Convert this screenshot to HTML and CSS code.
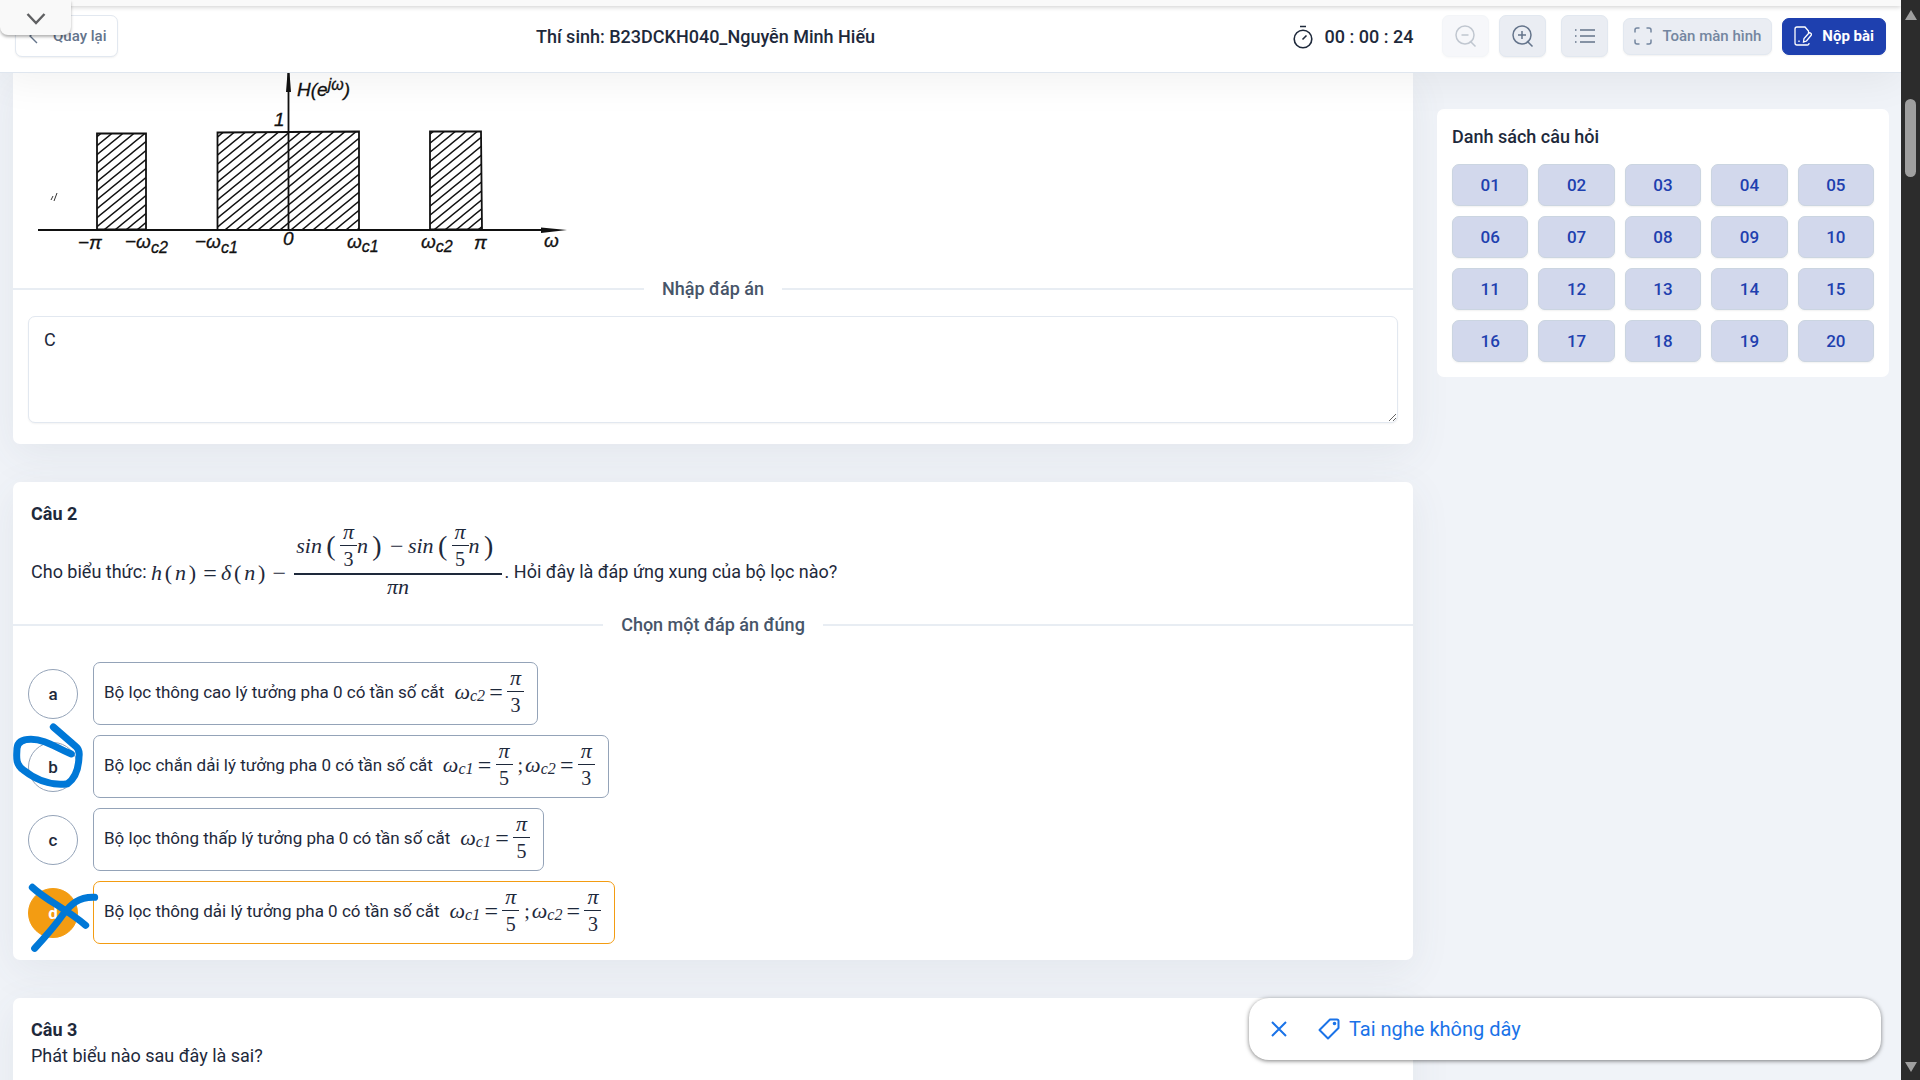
FILE: index.html
```html
<!DOCTYPE html>
<html lang="vi">
<head>
<meta charset="utf-8">
<meta name="viewport" content="width=device-width, initial-scale=1">
<title>Bài thi</title>
<link rel="stylesheet" href="styles.css">
</head>
<body>
<div class="screen">
  <div class="page">
    <header class="header">
      <button class="btn btn-back" type="button">
        <svg width="16" height="16" viewBox="0 0 16 16" fill="none" stroke="currentColor" stroke-width="1.4"><path d="M10 1 3 8l7 7"/></svg>
        Quay lại
      </button>
      <h1 class="candidate">Thí sinh: B23DCKH040_Nguyễn Minh Hiếu</h1>
      <div class="timer">
        <svg width="20" height="24" viewBox="0 0 20 24" fill="none" stroke="currentColor" stroke-width="1.6"><circle cx="10" cy="14" r="8.8"/><path d="m9.500 14.500 4-4M7 1.500h6"/></svg>
        <span>00 : 00 : 24</span>
      </div>
      <div class="tools">
        <button class="btn btn-icon" type="button" aria-label="Thu nhỏ" disabled>
          <svg width="24" height="24" viewBox="0 0 24 24" fill="none" stroke="currentColor" stroke-width="1.500"><circle cx="11" cy="11" r="9"/><path d="M7.500 11h7M16 17l5.500 5.500"/></svg>
        </button>
        <button class="btn btn-icon" type="button" aria-label="Phóng to">
          <svg width="24" height="24" viewBox="0 0 24 24" fill="none" stroke="currentColor" stroke-width="1.500"><circle cx="11" cy="11" r="9"/><path d="M7 11h8M11 7v8M16 17l5.500 5.500"/></svg>
        </button>
      </div>
      <button class="btn btn-icon btn-list" type="button" aria-label="Danh sách">
        <svg width="24" height="24" viewBox="0 0 24 24" fill="none" stroke="currentColor" stroke-width="1.500"><path d="M7 6h15M7 12h15M7 18h15M2 6h1.500M2 12h1.500M2 18h1.500"/></svg>
      </button>
      <div class="actions">
        <button class="btn btn-full" type="button">
          <svg width="18" height="18" viewBox="0 0 18 18" fill="none" stroke="currentColor" stroke-width="1.500"><path d="M1 5.500V3a2 2 0 0 1 2-2h2.500M12.500 1H15a2 2 0 0 1 2 2v2.500M17 12.500V15a2 2 0 0 1-2 2h-2.500M5.500 17H3a2 2 0 0 1-2-2v-2.500"/></svg>
          Toàn màn hình
        </button>
        <button class="btn btn-submit" type="button">
          <svg width="18" height="20" viewBox="0 0 18 20" fill="none" stroke="currentColor" stroke-width="1.300"><path d="M14.500 7V5l-3.500-4H3a2 2 0 0 0-2 2v14a2 2 0 0 0 2 2h10.500a1.500 1.500 0 0 0 1.500-1.500V17M9.500 16l.5-3.500 4.500-5a1.600 1.600 0 0 1 2.500 2L12.500 15zM5 14.500v1.500"/></svg>
          Nộp bài
        </button>
      </div>
    </header>

    <div class="content">
      <main class="questions">
        <section class="card card-first">
          <svg class="figure" width="560" height="190" viewBox="28 73 560 190" role="img" aria-label="Đáp ứng tần số">
            <defs>
              <pattern id="hatch" width="11" height="9" patternUnits="userSpaceOnUse"><path d="M-2.200 10.800 13.200-1.800M-2.200 1.800 2.200-1.800M8.800 10.800 13.200 7.200" stroke="#111" stroke-width="1.400"/></pattern>
            </defs>
            <g fill="url(#hatch)" stroke="#111" stroke-width="1.800">
              <path d="M97 133.500h49v96H97zM217.500 132.500 359 131.500V230H217.500zM430 131.500h51l1 98h-52z"/>
            </g>
            <g fill="none" stroke="#111" stroke-width="1.800"><path d="M288.500 73v157M38 230h515"/></g>
            <path fill="#111" d="M287.500 73h2l1.500 19h-5zM541 227.500l26 2.500-26 3z"/>
            <path d="m51 200 2-4m1 5 3-8" stroke="#333"/>
            <g class="hand">
              <text x="297" y="96">H(e<tspan class="hand-sup" dy="-6">jω</tspan><tspan dy="6">)</tspan></text>
              <text x="274" y="126">1</text>
              <text x="78" y="249">−π</text>
              <text x="125" y="248">−ω<tspan class="hand-sub" dy="5">c2</tspan></text>
              <text x="195" y="248">−ω<tspan class="hand-sub" dy="5">c1</tspan></text>
              <text x="283" y="245">0</text>
              <text x="347" y="248">ω<tspan class="hand-sub" dy="4">c1</tspan></text>
              <text x="421" y="248">ω<tspan class="hand-sub" dy="4">c2</tspan></text>
              <text x="474" y="249">π</text>
              <text x="544" y="247">ω</text>
            </g>
          </svg>
          <label class="divider" for="answer1">Nhập đáp án</label>
          <textarea class="answer" id="answer1">C</textarea>
        </section>

        <section class="card">
          <h2 class="q-title">Câu 2</h2>
          <p class="q-text q-formula">Cho biểu thức:
            <span class="math formula"><i>h</i><span class="par">(</span><i>n</i><span class="par">)</span><span class="op">=</span><i>δ</i><span class="par">(</span><i>n</i><span class="par">)</span><span class="op">−</span><span class="frac-big"><span class="num"><i>sin</i><span class="par par-big">(</span><span class="frac"><i>π</i><span class="den">3</span></span><i>n</i><span class="par par-big">)</span><span class="op">−</span><i>sin</i><span class="par par-big">(</span><span class="frac"><i>π</i><span class="den">5</span></span><i>n</i><span class="par par-big">)</span></span><span class="den"><i>πn</i></span></span></span>. Hỏi đây là đáp ứng xung của bộ lọc nào?</p>
          <div class="divider">Chọn một đáp án đúng</div>
          <div class="options" role="radiogroup" aria-label="Câu 2">
            <label class="option">
              <span class="mark"><input class="radio" type="radio" name="q2"><span class="letter">a</span></span>
              <span class="box">Bộ lọc thông cao lý tưởng pha 0 có tần số cắt <span class="math"><i>ω</i><sub>c2</sub><span class="eq">=</span><span class="frac"><i>π</i><span class="den">3</span></span></span></span>
            </label>
            <label class="option">
              <span class="mark"><input class="radio" type="radio" name="q2"><span class="letter">b</span>
                <svg class="ink ink-ring" width="72" height="68" viewBox="36 246 216 204"><path d="M160 261 228 320Q240 330 237 350C236 385 225 415 203 431C170 436 120 430 70 390C45 372 50 350 51 325C53 305 70 298 93 298C135 298 165 322 214 342"/></svg></span>
              <span class="box">Bộ lọc chắn dải lý tưởng pha 0 có tần số cắt <span class="math"><i>ω</i><sub>c1</sub><span class="eq">=</span><span class="frac"><i>π</i><span class="den">5</span></span><span class="sep">;</span><i>ω</i><sub>c2</sub><span class="eq">=</span><span class="frac"><i>π</i><span class="den">3</span></span></span></span>
            </label>
            <label class="option">
              <span class="mark"><input class="radio" type="radio" name="q2"><span class="letter">c</span></span>
              <span class="box">Bộ lọc thông thấp lý tưởng pha 0 có tần số cắt <span class="math"><i>ω</i><sub>c1</sub><span class="eq">=</span><span class="frac"><i>π</i><span class="den">5</span></span></span></span>
            </label>
            <label class="option">
              <span class="mark"><input class="radio" type="radio" name="q2" checked><span class="letter">d</span>
                <svg class="ink ink-cross" width="72" height="72" viewBox="84 726 216 216"><path d="M97 745C140 785 200 810 257 859M284 775C235 773 212 797 190 825C165 860 130 900 104 928"/></svg></span>
              <span class="box">Bộ lọc thông dải lý tưởng pha 0 có tần số cắt <span class="math"><i>ω</i><sub>c1</sub><span class="eq">=</span><span class="frac"><i>π</i><span class="den">5</span></span><span class="sep">;</span><i>ω</i><sub>c2</sub><span class="eq">=</span><span class="frac"><i>π</i><span class="den">3</span></span></span></span>
            </label>
          </div>
        </section>

        <section class="card card-last">
          <h2 class="q-title">Câu 3</h2>
          <p class="q-text">Phát biểu nào sau đây là sai?</p>
        </section>
      </main>

      <aside class="side">
        <h2 class="side-title">Danh sách câu hỏi</h2>
        <div class="numbers">
          <button type="button">01</button><button type="button">02</button><button type="button">03</button><button type="button">04</button><button type="button">05</button>
          <button type="button">06</button><button type="button">07</button><button type="button">08</button><button type="button">09</button><button type="button">10</button>
          <button type="button">11</button><button type="button">12</button><button type="button">13</button><button type="button">14</button><button type="button">15</button>
          <button type="button">16</button><button type="button">17</button><button type="button">18</button><button type="button">19</button><button type="button">20</button>
        </div>
      </aside>
    </div>

    <div class="strip"></div>
    <button class="tab" type="button" aria-label="Mở thanh công cụ">
      <svg width="20" height="12" viewBox="0 0 20 12" fill="none" stroke="#5f6062" stroke-width="2.400"><path d="m1.500 1 8.500 9 8.500-9"/></svg>
    </button>
    <div class="toast">
      <button class="toast-close" type="button" aria-label="Đóng">
        <svg width="16" height="16" viewBox="0 0 16 16" fill="none" stroke="currentColor" stroke-width="2"><path d="m1 1 14 14M15 1 1 15"/></svg>
      </button>
      <a class="toast-link" href="#">
        <svg width="22" height="22" viewBox="0 0 22 22" fill="none" stroke="currentColor" stroke-width="2" stroke-linejoin="round"><path d="M12 1.500h7a1.500 1.500 0 0 1 1.500 1.500v7L10 20.500 1.500 12z"/><circle cx="16.500" cy="5.500" r=".8" fill="currentColor"/></svg>
        Tai nghe không dây
      </a>
    </div>
  </div>

  <div class="scrollbar">
    <span class="arrow arrow-up"></span>
    <span class="thumb"></span>
    <span class="arrow arrow-down"></span>
  </div>
</div>
</body>
</html>
```

FILE: styles.css
```css
* { box-sizing: border-box; }
body {
  margin: 0;
  font-family: Roboto, "Noto Sans", sans-serif;
  font-size: 18px;
  line-height: 26px;
  color: #1e293b;
}
h1, h2, p { margin: 0; }
button { font: inherit; color: inherit; margin: 0; cursor: pointer; }

.screen {
  display: grid;
  grid-template-columns: minmax(0, 1fr) 19px;
  height: 100vh;
  overflow: hidden;
}
.page {
  position: relative;
  display: flex;
  flex-direction: column;
  overflow: hidden;
  background: #f0f3f8;
}

/* Header */
.header {
  position: relative;
  z-index: 1;
  display: flex;
  align-items: center;
  height: 73px;
  flex: none;
  padding: 0 15px;
  background: #fff;
  border-bottom: 1px solid #dfe6ef;
  box-shadow: 0 8px 40px rgba(0, 0, 0, .06);
}
.btn {
  display: flex;
  align-items: center;
  justify-content: center;
  gap: 10px;
  height: 37px;
  padding: 0 11px;
  border: 1px solid #e2e8f0;
  border-radius: 7px;
  background: #eaedf3;
  color: #64748b;
  font-size: 15px;
  font-weight: 500;
  white-space: nowrap;
  box-shadow: 0 1px 2px rgba(0, 0, 0, .06);
}
.btn svg { flex: none; }
.btn-back { height: 42px; background: #fff; }
.btn-icon { width: 47px; height: 42px; }
.btn-icon:disabled { opacity: .4; }
.btn-submit { background: #1e40af; border-color: #1e40af; color: #fff; font-weight: 700; }
.candidate, .timer { padding-top: 2px; font-size: 18px; font-weight: 500; }
.candidate { flex: 1; text-align: center; }
.timer { display: flex; align-items: center; gap: 12px; }
.tools { display: flex; gap: 10px; margin-left: 29px; }
.btn-list { margin: 0 15px; }
.actions { display: flex; gap: 10px; }
.btn-full { padding: 0 10px; color: #7486a0; }

/* Questions */
.content {
  display: grid;
  grid-template-columns: minmax(0, 1400fr) minmax(0, 452fr);
  gap: 24px;
  align-items: start;
  padding: 0 12px 0 13px;
}
.questions { display: flex; flex-direction: column; gap: 38px; }
.card {
  padding: 19px 0 16px;
  border-radius: 7px;
  background: #fff;
  box-shadow: 0 10px 40px rgba(71, 85, 105, .08);
}
.card-first { padding: 0 0 21px; border-radius: 0 0 7px 7px; }
.card-last { padding-bottom: 60px; }
.figure { display: block; margin: 0 15px 13px; }
.hand { font: italic 19px "Liberation Sans", sans-serif; fill: #111; stroke: #111; stroke-width: .3; }
.hand-sub, .hand-sup { font-size: 16px; }
.divider {
  display: flex;
  align-items: center;
  gap: 18px;
  font-weight: 500;
  color: #475569;
}
.divider::before, .divider::after { content: ""; flex: 1; height: 2px; background: #e8edf3; }
.answer {
  display: block;
  width: calc(100% - 30px);
  height: 107px;
  margin: 14px 15px 0;
  padding: 10px 15px;
  border: 1px solid #e2e8f0;
  border-radius: 7px;
  background: #fff;
  color: inherit;
  font: inherit;
  box-shadow: 0 1px 2px rgba(0, 0, 0, .05);
}
.q-title { padding: 0 18px; font-size: 18px; font-weight: 700; }
.q-text { padding: 0 18px; }
.q-formula { margin-bottom: -7px; }

/* Formulas */
.math {
  display: inline-flex;
  align-items: center;
  vertical-align: middle;
  font-family: "Liberation Serif", serif;
  font-size: 20px;
  line-height: 26px;
}
.math i { font-size: 22px; }
.math sub { font-size: 16px; font-style: italic; line-height: 16px; padding-top: 8px; vertical-align: baseline; }
.par { width: 13px; text-align: center; font-size: 22px; }
.par-big { width: 18px; font-size: 28px; }
.op, .eq { width: 22px; text-align: center; font-size: 24px; }
.sep { padding: 0 2px 0 5px; }
.frac { display: flex; flex-direction: column; align-items: center; min-width: 17px; }
.den { align-self: stretch; text-align: center; border-top: 1px solid #1e293b; }
.frac-big { display: grid; grid-template-rows: 46px 46px; margin: 0 3px 0 4px; }
.num { display: flex; align-items: center; padding: 0 4px 9px 2px; }
.frac-big > .den { border-top-width: 2px; line-height: 24px; }

/* Answer options */
.options { display: flex; flex-direction: column; align-items: flex-start; gap: 10px; padding: 24px 15px 0; }
.option { display: flex; align-items: center; gap: 15px; font-size: 17px; }
.mark { position: relative; display: grid; place-items: center; width: 50px; height: 50px; }
.radio {
  grid-area: 1 / 1;
  appearance: none;
  width: 50px;
  height: 50px;
  margin: 0;
  border: 1px solid #94a3b8;
  border-radius: 50%;
}
.letter { grid-area: 1 / 1; font-weight: 500; }
.radio:checked { background: #f39c12; border-color: #f39c12; }
.radio:checked + .letter { color: #fff; font-weight: 700; }
.box {
  display: flex;
  align-items: center;
  gap: 10px;
  min-height: 63px;
  padding: 0 13px 4px 10px;
  border: 1px solid #94a3b8;
  border-radius: 7px;
}
.option:has(:checked) .box { border-color: #f39c12; }
.ink { position: absolute; fill: none; stroke: #0078d7; stroke-width: 21; stroke-linecap: round; stroke-linejoin: round; }
.ink-ring { left: -16px; top: -20px; }
.ink-cross { left: 0; top: -7px; }

/* Question list */
.side { margin-top: 36px; padding: 15px; border-radius: 7px; background: #fff; }
.side-title { margin-bottom: 14px; font-size: 18px; font-weight: 500; }
.numbers { display: grid; grid-template-columns: repeat(5, 1fr); gap: 10px; }
.numbers button {
  height: 42px;
  padding: 0;
  border: 1px solid #cbd5e1;
  border-radius: 7px;
  background: #d2d8ec;
  color: #1e40af;
  font-size: 17px;
  font-weight: 500;
  box-shadow: 0 1px 2px rgba(0, 0, 0, .06);
}

/* Floating browser parts */
.strip { position: absolute; inset: 0 0 auto; z-index: 2; height: 6px; background: #f9f9f9; box-shadow: 0 1px 5px rgba(0, 0, 0, .2); }
.tab {
  position: absolute;
  top: 0;
  left: 0;
  z-index: 3;
  width: 71px;
  height: 35px;
  padding: 2px 0 0;
  border: 0;
  border-radius: 0 0 8px 8px;
  background: #f9f9f9;
  box-shadow: 0 2px 3px rgba(0, 0, 0, .3);
}
.toast {
  position: absolute;
  right: 20px;
  bottom: 20px;
  z-index: 3;
  display: flex;
  align-items: center;
  gap: 31px;
  width: 632px;
  height: 62px;
  padding: 0 22px;
  border-radius: 20px;
  background: #fff;
  color: #1a73e8;
  box-shadow: 0 1px 4px rgba(0, 0, 0, .5);
}
.toast-close { display: flex; padding: 0; border: 0; background: none; }
.toast-link { display: flex; align-items: center; gap: 9px; color: inherit; font-size: 20px; text-decoration: none; }

.scrollbar { display: flex; flex-direction: column; align-items: center; padding: 10px 0 8px; background: #2c2c2c; }
.arrow { border: 6px solid transparent; }
.arrow-up { border-top: 0; border-bottom: 10px solid #9f9f9f; }
.arrow-down { border-bottom: 0; border-top: 10px solid #9f9f9f; margin-top: auto; }
.thumb { width: 11px; height: 78px; margin-top: 79px; border-radius: 6px; background: #9f9f9f; }
```
